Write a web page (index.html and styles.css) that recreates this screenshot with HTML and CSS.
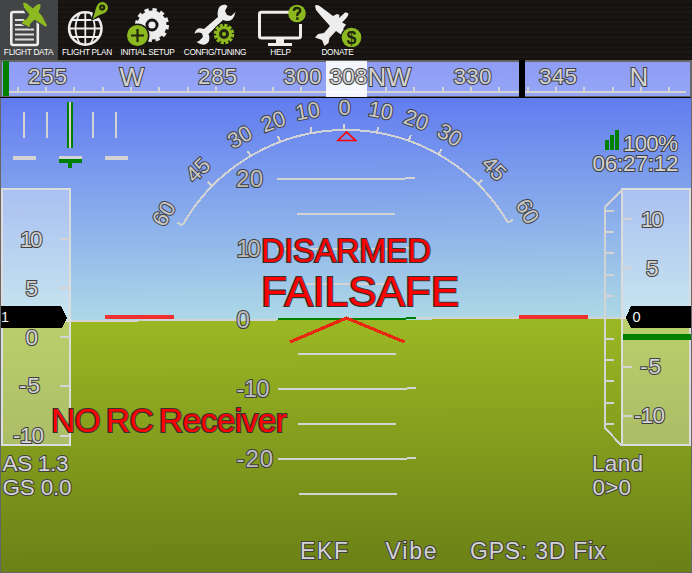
FILE: index.html
```
<!DOCTYPE html>
<html lang="en">
<head>
<meta charset="utf-8">
<title>Flight Data</title>
<link rel="stylesheet" href="styles.css">
</head>
<body>
<nav class="toolbar">
  <button class="tool tool-data active">
    <svg viewBox="0 0 58 47">
      <rect class="line" x="11.3" y="12" width="26.5" height="33" rx="2"/>
      <path class="thin" d="M15 20H24M15 25H25M15 29.5H34M15 34.5H34M15 39.5H34"/>
      <path class="tile-edge" d="M21 1L28 1L34 6L39 2V16L48 27L44 28L35 21L30 29L21 24L27 16L21 6Z"/>
      <path class="lime" d="M23 3Q26 2 28.500 5L33 8.500Q37 3.500 40.500 4Q41 8 38.500 12L42 16L47 25.500Q46 27.500 43 25L34.500 19.500L30 24L29.500 27.500L26.500 25.500L22 23.500L23.500 20L26.500 19.500L29.500 14.500L24 7.500Z"/>
    </svg>
    <span>FLIGHT DATA</span>
  </button>
  <button class="tool tool-plan">
    <svg viewBox="58 0 59 47">
      <circle class="line" cx="85.300" cy="28.500" r="16.200"/>
      <path class="grid" d="M69 28.500H102M72 20H99M72 37H99M85.300 12V45M80 13Q71 28 80 44M90.600 13Q99 28 90.600 44"/>
      <path class="cut" d="M91 21L94 8H107L104 15Z"/>
      <path class="lime" d="M92.500 19.500Q95 13 96 8Q98 1.500 103 2Q108.500 3.500 107.800 9Q106.500 13 102 14Q97 15.500 92.500 19.500Z"/>
      <circle class="dark-line" cx="102.200" cy="7.500" r="2"/>
    </svg>
    <span>FLIGHT PLAN</span>
  </button>
  <button class="tool tool-setup">
    <svg viewBox="117 0 62 47">
      <circle cx="152" cy="25" r="10.500" fill="none" stroke="#ededed" stroke-width="8"/>
      <circle cx="152" cy="25" r="15" fill="none" stroke="#ededed" stroke-width="4" stroke-dasharray="4.200 3.654"/>
      <circle class="white" cx="152" cy="25" r="3.600"/>
      <circle class="cut" cx="137.500" cy="35.500" r="12"/>
      <circle class="lime" cx="137.500" cy="35.500" r="10.500"/>
      <path class="dark-line" d="M131 35.500H144M137.500 29V42"/>
    </svg>
    <span>INITIAL SETUP</span>
  </button>
  <button class="tool tool-config">
    <svg viewBox="179 0 73 47">
      <path class="white" d="M225 4.500Q216 5 218 17L204 29Q196 26 194.500 34Q198 31.500 202 33.500L203 37L199 41L196.500 42Q205 48 209 41Q210 37 208.500 34L223 20Q233 24 235.500 12L231 16L227 15L225 11L227.500 6Z"/>
      <circle class="cut" cx="224" cy="34" r="11"/>
      <circle class="lime" cx="224" cy="34" r="8"/>
      <circle cx="224" cy="34" r="8.500" fill="none" stroke="#8db920" stroke-width="3.500" stroke-dasharray="3.100 1.350"/>
      <circle cx="224" cy="34" r="3.500" fill="none" stroke="#24280e" stroke-width="3"/>
    </svg>
    <span>CONFIG/TUNING</span>
  </button>
  <button class="tool tool-help">
    <svg viewBox="252 0 58 47">
      <path d="M289 12.200H261.500Q259.500 12.200 259.500 14V36Q259.500 38 261.500 38H298.500Q300.500 38 300.500 36V24" fill="none" stroke="#ededed" stroke-width="3"/>
      <path class="white" d="M276 39H284V43H292V46H268V43H276Z"/>
      <circle class="lime" cx="297" cy="13.500" r="8.800"/>
      <path d="M293.800 11Q294 7.800 297.300 8Q301 8.500 300 11.500Q297 13.500 297.300 16" fill="none" stroke="#20260b" stroke-width="2.400"/>
      <rect x="296.100" y="17.300" width="2.500" height="2.500" fill="#20260b"/>
    </svg>
    <span>HELP</span>
  </button>
  <button class="tool tool-donate">
    <svg viewBox="310 0 56 47">
      <path class="white" d="M315 5.500Q317.500 4 321 7L333 16L337 14L339.500 15L339 18L345 12.500Q348 12 348.500 14Q348 17 342 22.500L346 24.500L343 29L353 38L350 41L336 31L329.500 38L328.500 43L324.500 46L322 40L315 37.500L318 34L324 33L330 26L321 16L316 10Z"/>
      <circle class="cut" cx="351.500" cy="37.500" r="11"/>
      <circle class="lime" cx="351.500" cy="37.500" r="9.800"/>
      <text class="dollar" x="351.500" y="44" text-anchor="middle">$</text>
    </svg>
    <span>DONATE</span>
  </button>
</nav>

<main class="hud">
<svg viewBox="0 60 692 513" width="692" height="513">
  <defs>
    <linearGradient id="sky" gradientUnits="userSpaceOnUse" x1="0" y1="98" x2="1" y2="320">
      <stop offset="0" stop-color="#617bf0"/><stop offset="1" stop-color="#add8e6"/>
    </linearGradient>
    <linearGradient id="ground" gradientUnits="userSpaceOnUse" x1="0" y1="320" x2="1" y2="572">
      <stop offset="0" stop-color="#9bb824"/><stop offset="1" stop-color="#6b8016"/>
    </linearGradient>
    <linearGradient id="tape" gradientUnits="userSpaceOnUse" x1="0" y1="61" x2="0" y2="97">
      <stop offset="0" stop-color="#8e9cf5"/><stop offset="1" stop-color="#95a6f6"/>
    </linearGradient>
  </defs>

  <g class="crisp">
    <rect x="0" y="60" width="692" height="513" fill="#666"/>
    <rect x="1" y="98" width="690" height="474" fill="url(#sky)"/>
    <path d="M1 322L691 318V572H1Z" fill="url(#ground)"/>
    <path class="mark" d="M1 321.500L278 319.500M416 318.500L691 317.500"/>
  </g>

  <!-- heading tape -->
  <g class="crisp">
    <rect x="2" y="62" width="688" height="34" fill="url(#tape)"/>
    <rect x="0" y="97" width="691" height="1" fill="#000"/>
    <path class="mark" d="M9 92H686"/>
    <path class="mark" d="M18 87v4M46 87v4M74 87v4M103 87v4M131 87v4M159 87v4M188 87v4M216 87v4M244 87v4M273 87v4M301 87v4M329 87v4M358 87v4M386 87v4M414 87v4M443 87v4M471 87v4M499 87v4M528 87v4M556 87v4M584 87v4M613 87v4M641 87v4M669 87v4"/>
    <rect x="326" y="61" width="41" height="36" fill="#fff" fill-opacity=".9"/>
    <rect x="3" y="61" width="6" height="35" fill="#008000"/>
    <rect x="519" y="60" width="6" height="38" fill="#000"/>
  </g>
  <g class="label">
    <text x="28" y="83.500" textLength="39">255</text>
    <text x="198" y="83.500" textLength="39">285</text>
    <text x="283.500" y="83.500" textLength="38">300</text>
    <text x="329.500" y="83.500" textLength="38">308</text>
    <text x="453.500" y="83.500" textLength="38">330</text>
    <text x="539" y="83.500" textLength="38">345</text>
  </g>
  <g class="label cardinal">
    <text x="119.500" y="86">W</text>
    <text x="367.500" y="86" textLength="43.500">NW</text>
    <text x="629.500" y="86">N</text>
  </g>

  <!-- turn and slip -->
  <g class="crisp">
    <path class="mark" d="M24 112V138M47 112V138M93 112V138M116 112V138"/>
    <rect x="67" y="102" width="6" height="46" fill="#008000"/>
    <rect x="69" y="102" width="2" height="46" fill="#d3d3d3"/>
    <path d="M13 156h23v4h-23zM59 156h23v4h-23zM105 156h23v4h-23z" fill="#d3d3d3"/>
    <path d="M59 159H82V163H72V168H68V163H59Z" fill="#008000"/>
  </g>

  <!-- bank scale -->
  <g class="crisp" transform="rotate(-.5 346 318)">
    <path class="mark" d="M183.200 224A188 188 0 0 1 508.800 224"/>
    <g class="mark">
      <path id="tick" d="M346 130v-6"/>
      <use href="#tick" transform="rotate(-60 346 318)"/>
      <use href="#tick" transform="rotate(-45 346 318)"/>
      <use href="#tick" transform="rotate(-30 346 318)"/>
      <use href="#tick" transform="rotate(-20 346 318)"/>
      <use href="#tick" transform="rotate(-10 346 318)"/>
      <use href="#tick" transform="rotate(10 346 318)"/>
      <use href="#tick" transform="rotate(20 346 318)"/>
      <use href="#tick" transform="rotate(30 346 318)"/>
      <use href="#tick" transform="rotate(45 346 318)"/>
      <use href="#tick" transform="rotate(60 346 318)"/>
    </g>
  </g>
  <g class="label bank">
    <text transform="translate(344.500 107)" y="8">0</text>
    <text transform="translate(307.500 110.500) rotate(-10)" y="8">10</text>
    <text transform="translate(273 121) rotate(-20)" y="8">20</text>
    <text transform="translate(239.500 136.500) rotate(-30)" y="8">30</text>
    <text transform="translate(197.500 169.500) rotate(-45)" y="8">45</text>
    <text transform="translate(163.500 213.500) rotate(-60)" y="8">60</text>
    <text transform="translate(381 110) rotate(10)" y="8">10</text>
    <text transform="translate(416.500 119.500) rotate(20)" y="8">20</text>
    <text transform="translate(450 134.500) rotate(30)" y="8">30</text>
    <text transform="translate(494.500 168) rotate(45)" y="8">45</text>
    <text transform="translate(528 211) rotate(60)" y="8">60</text>
  </g>
  <path d="M346.500 132L338 140.500H355.500Z" fill="none" stroke="#f00" stroke-width="1.700"/>

  <!-- pitch ladder -->
  <g class="crisp">
    <path class="mark" d="M277 179H405M405 178H415M297 214H395M277 249H405M405 248H415M298 284H396M298 354H396M278 389H407M407 388H416M298 424H396M278 459H407M407 458H416M299 494H397"/>
    <path d="M278 319H406M406 318H416" stroke="#008000" stroke-width="2"/>
  </g>
  <g class="label pitch">
    <text x="236" y="187" textLength="27">20</text>
    <text x="236.500" y="257" textLength="24">10</text>
    <text x="236.500" y="327.500">0</text>
    <text x="236.500" y="396.500" textLength="33">-10</text>
    <text x="236.500" y="466.500" textLength="36.500">-20</text>
  </g>

  <g class="crisp">
    <path d="M105 315h69v4h-69zM519 315h69v4h-69z" fill="#f03030"/>
    <path d="M290 342L346.500 318L404.500 342" fill="none" stroke="#e82810" stroke-width="3.200"/>
  </g>

  <!-- airspeed -->
  <g class="crisp">
    <rect x="2" y="189" width="68" height="256" class="strip"/>
    <path class="mark" d="M60 239h10M60 288h10M60 337h10M60 386h10M60 436h10"/>
    <path d="M1 306H61L67 317.500L62 328H1Z" fill="#000"/>
  </g>
  <g class="label">
    <text x="20" y="247" textLength="22.500">10</text>
    <text x="25.500" y="296">5</text>
    <text x="25.500" y="344.500">0</text>
    <text x="19" y="393" textLength="21">-5</text>
    <text x="13" y="442.500" textLength="31">-10</text>
    <text x="2.500" y="471" textLength="66">AS 1.3</text>
    <text x="2.500" y="495" textLength="69">GS 0.0</text>
  </g>
  <text class="value" x="1" y="322">1</text>

  <!-- altitude and climb rate -->
  <g class="crisp">
    <rect x="622" y="189" width="68" height="256" class="strip"/>
    <path class="mark" d="M622 190L605 207V428L622 446"/>
    <path class="mark" d="M605 211h9M605 232h9M605 253h9M605 275h9M605 296h9M605 339h9M605 360h9M605 381h9M605 403h9M605 424h9M622 219h10M622 268h10M622 367h10M622 416h10"/>
    <path d="M691 306H631L626 317.500L631 328H691Z" fill="#000"/>
    <rect x="623" y="334" width="68" height="6" fill="#008000"/>
    <path d="M605 140h4v10h-4zM610 135h4v15h-4zM615 130h4v20h-4z" fill="#008000"/>
  </g>
  <g class="label">
    <text x="641" y="227" textLength="22.500">10</text>
    <text x="646" y="276">5</text>
    <text x="640" y="374" textLength="21">-5</text>
    <text x="634" y="423" textLength="31">-10</text>
    <text x="623" y="151" textLength="55">100%</text>
    <text x="592.500" y="171" textLength="86">06:27:12</text>
    <text x="592" y="471" textLength="51">Land</text>
    <text x="592.500" y="495" textLength="38.500">0&gt;0</text>
    <text x="300" y="559" textLength="48" class="status">EKF</text>
    <text x="385.500" y="559" textLength="51" class="status">Vibe</text>
    <text x="470" y="559" textLength="135.500" class="status">GPS: 3D Fix</text>
  </g>
  <text class="value" x="632.500" y="322">0</text>

  <!-- warnings -->
  <g class="warning">
    <text x="261" y="262" textLength="170">DISARMED</text>
    <text x="261" y="305.500" textLength="198" class="large">FAILSAFE</text>
    <text x="51" y="432" textLength="236" class="rc">NO RC Receiver</text>
  </g>
</svg>
</main>
</body>
</html>
```
FILE: styles.css
```
body {
  margin: 0;
  width: 692px;
  height: 573px;
  overflow: hidden;
  background: #666;
  font-family: "Liberation Sans", sans-serif;
}
.toolbar {
  display: flex;
  height: 60px;
  background: repeating-linear-gradient(#171411 0 2px, #1c1916 2px 3px, #14110f 3px 5px);
}
.tool {
  display: flex;
  flex-direction: column;
  align-items: center;
  padding: 0;
  border: 0;
  background: none;
  color: #fff;
  font: 8.3px/10px "Liberation Sans", sans-serif;
  letter-spacing: -.3px;
}
.tool svg { display: block; width: 100%; height: 47px; }
.tool span { white-space: nowrap; margin-right: 1px; }
.tool.active { background: #434446; }
.tool-data { width: 58px; }
.tool-plan { width: 59px; }
.tool-setup { width: 62px; }
.tool-config { width: 73px; }
.tool-help { width: 58px; }
.tool-donate { width: 56px; }
.line { fill: none; stroke: #ededed; stroke-width: 2.6; }
.thin { fill: none; stroke: #ddd; stroke-width: 1.8; }
.grid { fill: none; stroke: #ededed; stroke-width: 1.8; }
.white { fill: #ededed; }
.lime { fill: #8db920; }
.cut { fill: #181512; }
.tile-edge { fill: #434446; }
.dark-line { fill: none; stroke: #20260b; stroke-width: 2.2; }
.dollar { font: bold 18px "Liberation Sans", sans-serif; letter-spacing: 0; fill: #20260b; }
.hud svg { display: block; }
.crisp { shape-rendering: crispEdges; }
.mark { fill: none; stroke: #d3d3d3; stroke-width: 2; }
.strip { fill: #fff; fill-opacity: .33; stroke: #dcdcdc; stroke-width: 2; }
.label { font-size: 22.5px; fill: #d3d3d3; stroke: #404040; stroke-width: 2px; paint-order: stroke; }
.cardinal { font-size: 26px; }
.bank { font-size: 22px; text-anchor: middle; fill: #c8c8c8; }
.pitch { font-size: 24px; fill: #bcbcbc; }
.status { font-size: 23px; }
.value { font-size: 14.5px; fill: #f4f4f4; }
.warning { font-size: 32.5px; fill: #f00; stroke: #333; stroke-width: 2.2px; paint-order: stroke; }
.large { font-size: 42.5px; }
.rc { font-size: 33.5px; word-spacing: -3px; }
```
